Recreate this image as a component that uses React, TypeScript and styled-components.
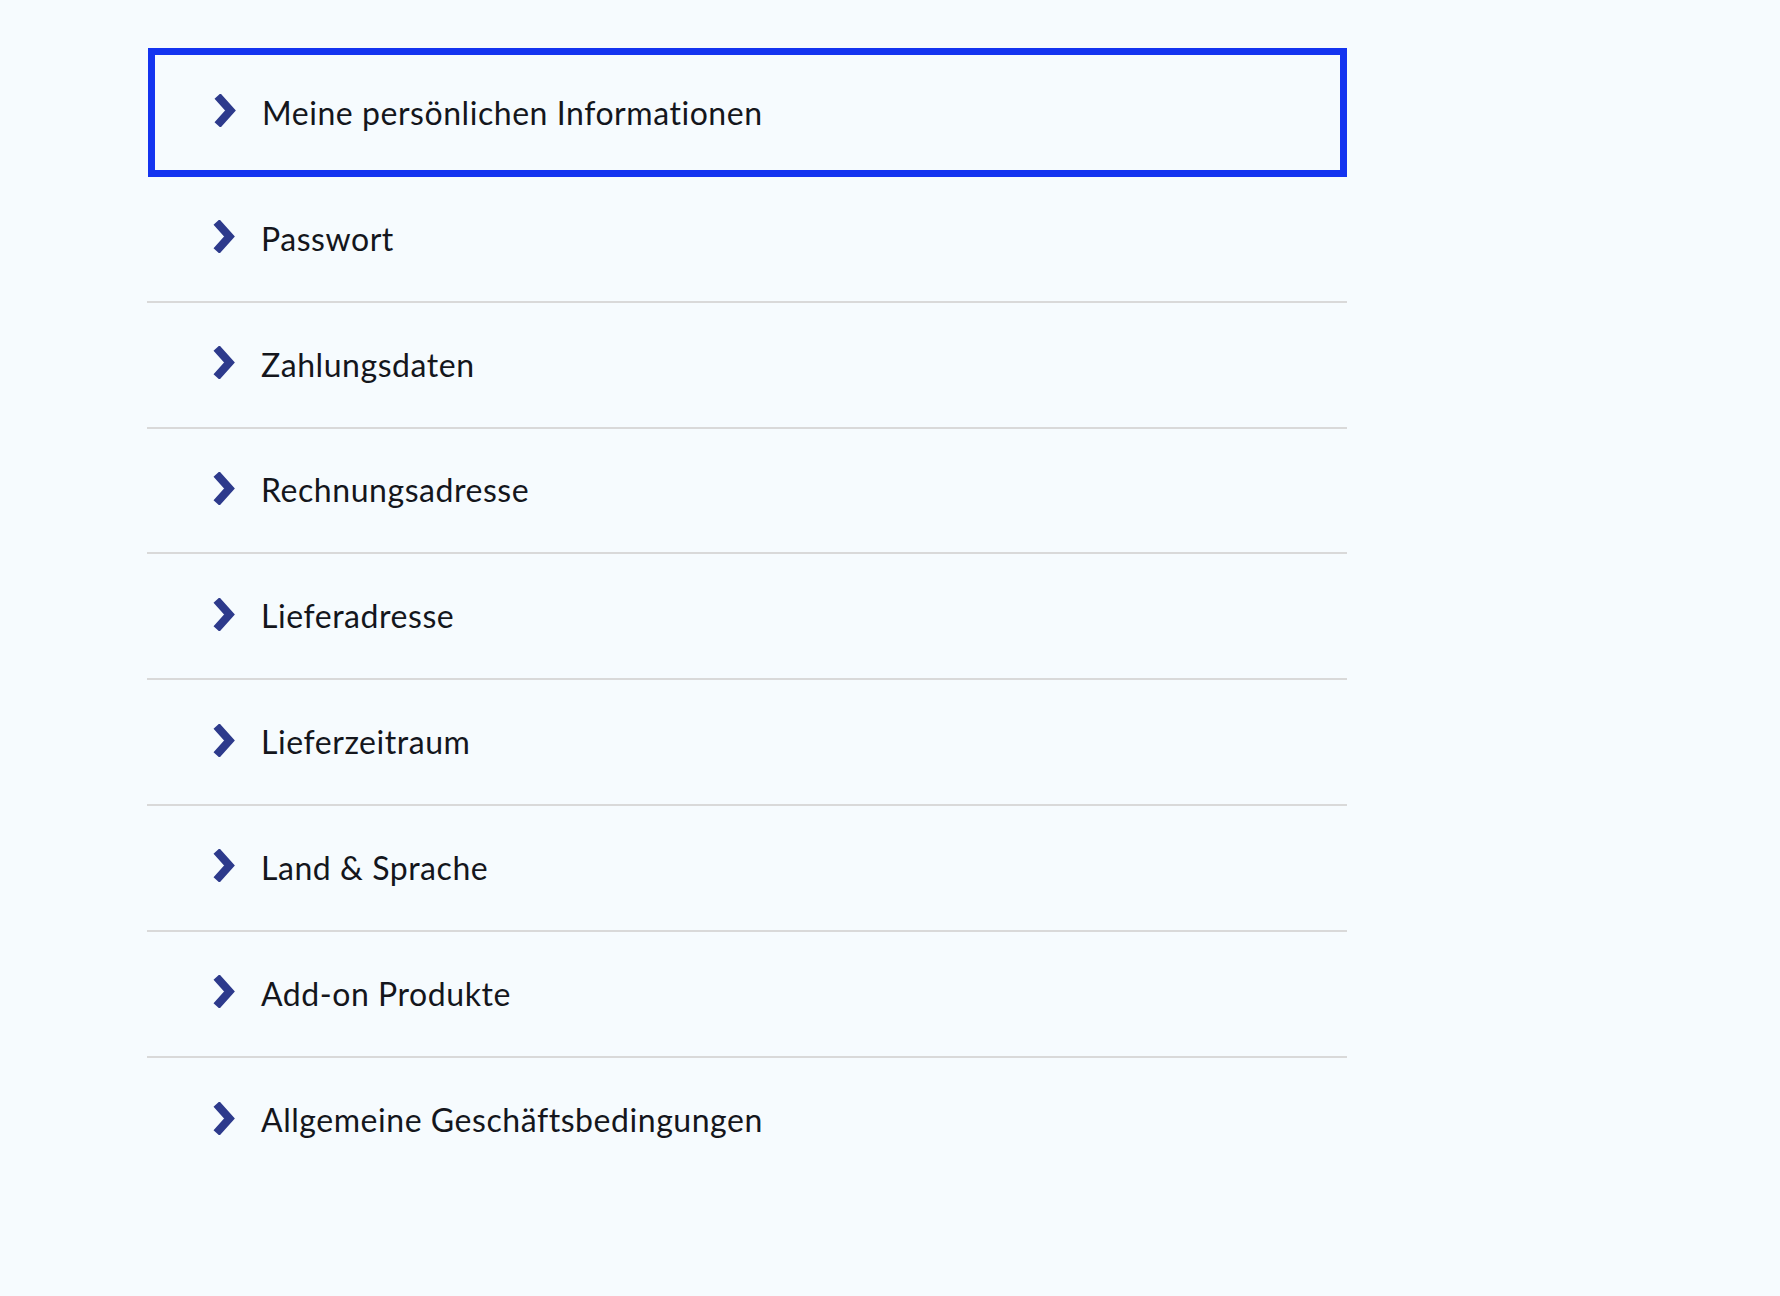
import React from 'react';
import styled, { createGlobalStyle } from 'styled-components';

const GlobalStyle = createGlobalStyle`
    html, body {
        margin: 0;
        padding: 0;
        background: #f6fbfe;
    }
    body {
        font-family: Lato, "Noto Sans", sans-serif;
    }
`;

const Page = styled.div`
    min-height: 1296px;
    padding: 48px 0 0 147px;
    box-sizing: border-box;
    background: #f6fbfe;
`;

const List = styled.ul`
    list-style: none;
    margin: 0;
    padding: 0;
    width: 1200px;
`;

const Row = styled.li<{ $active?: boolean; $last?: boolean }>`
    display: flex;
    align-items: center;
    gap: 25px;
    box-sizing: border-box;
    height: ${({ $active }) => ($active ? '129px' : '125.8px')};
    padding-left: 66px;
    border-bottom: ${({ $active, $last }) => ($active || $last ? 'none' : '2px solid #d9d9d9')};
    box-shadow: ${({ $active }) => ($active ? 'inset 0 0 0 7px #1434f0' : 'none')};
    margin-left: ${({ $active }) => ($active ? '1px' : '0')};
    cursor: pointer;
`;

const Chevron = styled.svg`
    flex: none;
    width: 23px;
    height: 33px;
    transform: translateY(-2px);
`;

const Label = styled.span`
    font-size: 32px;
    line-height: 1;
    color: #14161c;
    letter-spacing: 0.55px;
    font-variant-ligatures: none;
`;

const items = [
    'Meine persönlichen Informationen',
    'Passwort',
    'Zahlungsdaten',
    'Rechnungsadresse',
    'Lieferadresse',
    'Lieferzeitraum',
    'Land & Sprache',
    'Add-on Produkte',
    'Allgemeine Geschäftsbedingungen',
];

function ChevronIcon() {
    return (
        <Chevron viewBox="0 0 23 33" aria-hidden="true">
            <polyline
                points="3.5,2 16.5,16.5 3.5,31"
                fill="none"
                stroke="#2d3a8c"
                strokeWidth="8"
                strokeLinecap="butt"
                strokeLinejoin="miter"
            />
        </Chevron>
    );
}

export default function App() {
    return (
        <>
            <GlobalStyle />
            <Page>
                <List>
                    {items.map((label, i) => (
                        <Row key={label} $active={i === 0} $last={i === items.length - 1}>
                            <ChevronIcon />
                            <Label>{label}</Label>
                        </Row>
                    ))}
                </List>
            </Page>
        </>
    );
}
